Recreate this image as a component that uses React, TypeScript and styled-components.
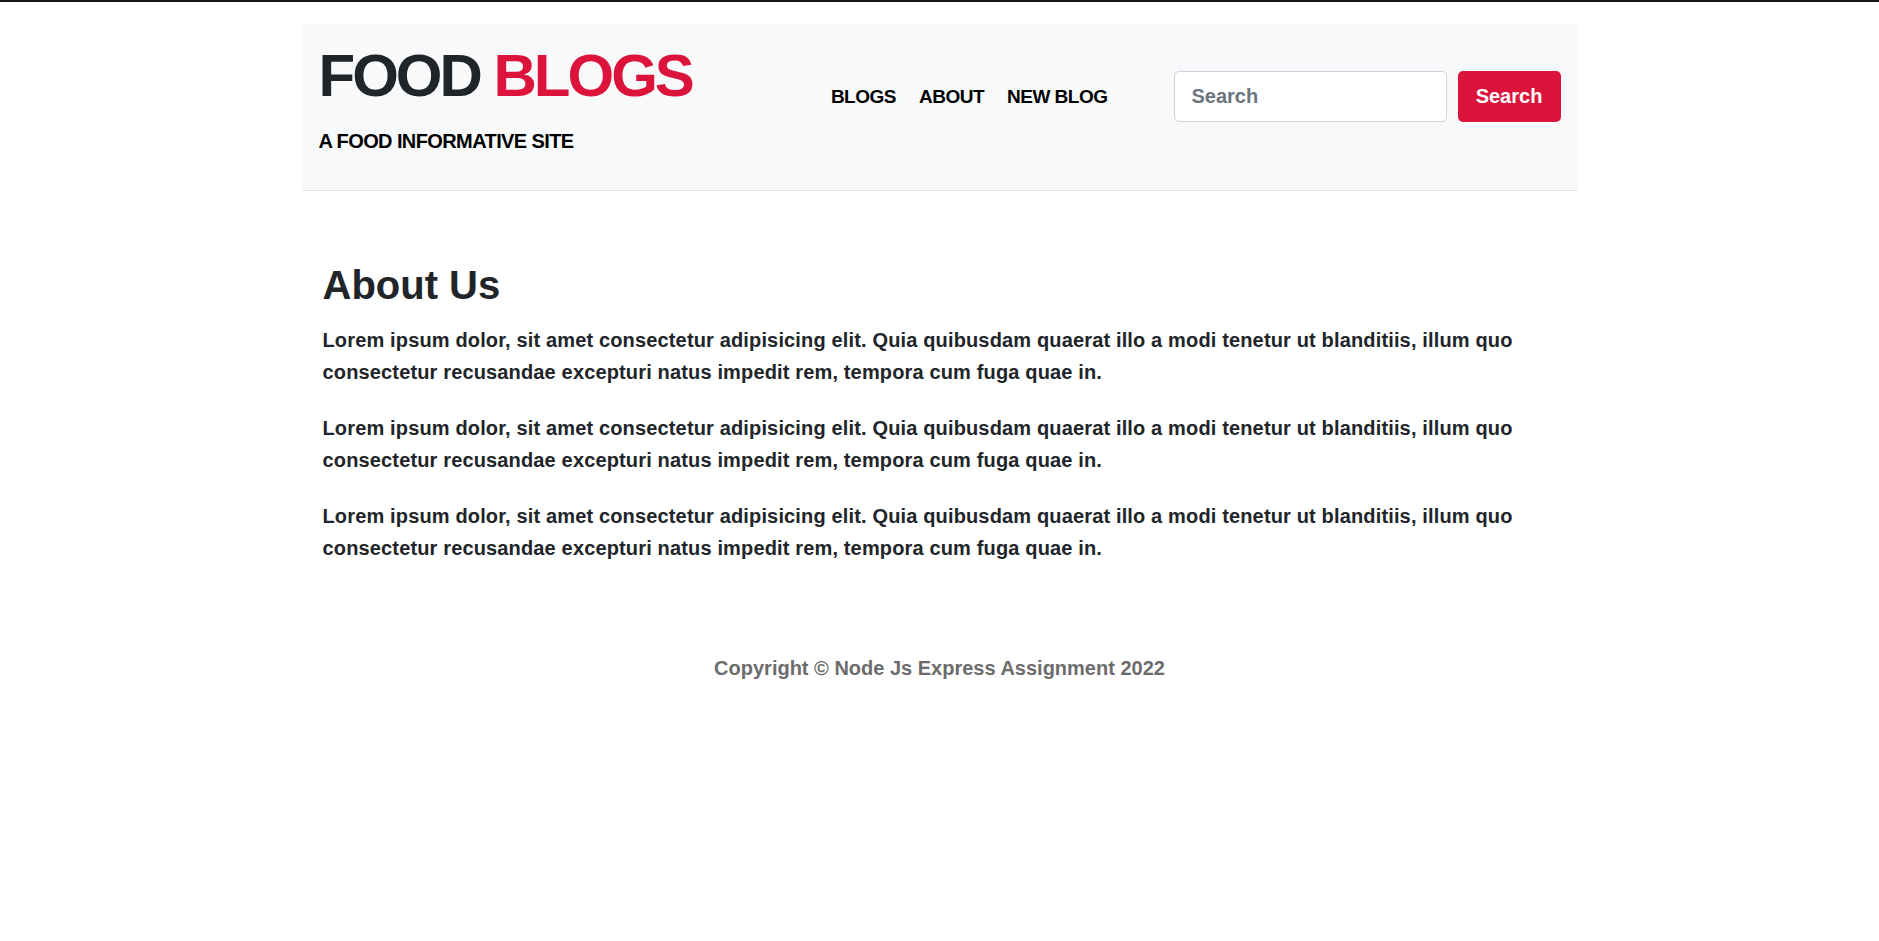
import React from 'react';
import styled, { createGlobalStyle } from 'styled-components';

const GlobalStyle = createGlobalStyle`
  * {
    box-sizing: border-box;
  }
  body {
    margin: 0;
    border-top: 2px solid #1a1610;
    background: #fff;
    color: #212529;
    font-family: "Liberation Sans", Arial, sans-serif;
  }
`;

const Header = styled.header`
  width: 1276px;
  height: 167px;
  margin: 22px auto 0;
  padding: 22px 17px 0 17px;
  display: flex;
  align-items: flex-start;
  background: #f8f9fa;
  border-bottom: 1px solid #dee2e6;
`;

const Brand = styled.div`
  display: flex;
  flex-direction: column;
  gap: 25px;
`;

const Title = styled.h1`
  margin: 0;
  font-size: 60px;
  line-height: 60px;
  font-weight: 700;
  letter-spacing: -3px;
  color: #212529;
`;

const Accent = styled.span`
  color: #dc143c;
`;

const Tagline = styled.h5`
  margin: 0;
  font-size: 20px;
  line-height: 20px;
  font-weight: 700;
  letter-spacing: -0.6px;
  color: #000;
`;

const Nav = styled.nav`
  margin: 25px 66px 0 auto;
  height: 51px;
  display: flex;
  align-items: center;
  gap: 23px;
`;

const NavLink = styled.a`
  font-size: 19px;
  font-weight: 700;
  letter-spacing: -0.5px;
  color: #000;
  text-decoration: none;
  cursor: pointer;
`;

const SearchForm = styled.form`
  margin-top: 25px;
  display: flex;
  gap: 11px;
`;

const SearchInput = styled.input`
  width: 273px;
  height: 51px;
  padding: 0 17px;
  border: 1px solid #ced4da;
  border-radius: 5px;
  background: #fff;
  font-family: "Liberation Sans", Arial, sans-serif;
  font-size: 20px;
  font-weight: 700;
  color: #212529;
  outline: none;

  &::placeholder {
    color: #6c757d;
  }
`;

const SearchButton = styled.button`
  width: 103px;
  height: 51px;
  border: 0;
  border-radius: 5px;
  background: #dc143c;
  color: #fff;
  font-family: "Liberation Sans", Arial, sans-serif;
  font-size: 20px;
  font-weight: 700;
  cursor: pointer;
`;

const Main = styled.main`
  width: 1276px;
  margin: 0 auto;
  padding: 70px 21px 0;
`;

const Heading = styled.h2`
  margin: 0 0 15px;
  font-size: 40px;
  line-height: 48px;
  font-weight: 700;
  color: #212529;
`;

const Text = styled.p`
  max-width: 1200px;
  margin: 0 0 24px;
  font-size: 20px;
  line-height: 32px;
  font-weight: 700;
  letter-spacing: 0.15px;
  color: #212529;
`;

const Footer = styled.footer`
  margin-top: 90px;
  text-align: center;
  font-size: 20px;
  line-height: 28px;
  font-weight: 700;
  color: #6c6c6c;
`;

const lorem =
  'Lorem ipsum dolor, sit amet consectetur adipisicing elit. Quia quibusdam quaerat illo a modi tenetur ut blanditiis, illum quo consectetur recusandae excepturi natus impedit rem, tempora cum fuga quae in.';

const App: React.FC = () => {
  return (
    <>
      <GlobalStyle />
      <Header>
        <Brand>
          <Title>
            FOOD <Accent>BLOGS</Accent>
          </Title>
          <Tagline>A FOOD INFORMATIVE SITE</Tagline>
        </Brand>
        <Nav>
          <NavLink>BLOGS</NavLink>
          <NavLink>ABOUT</NavLink>
          <NavLink>NEW BLOG</NavLink>
        </Nav>
        <SearchForm onSubmit={e => e.preventDefault()}>
          <SearchInput type="search" placeholder="Search" />
          <SearchButton type="submit">Search</SearchButton>
        </SearchForm>
      </Header>
      <Main>
        <Heading>About Us</Heading>
        {[0, 1, 2].map(i => (
          <Text key={i}>{lorem}</Text>
        ))}
      </Main>
      <Footer>Copyright © Node Js Express Assignment 2022</Footer>
    </>
  );
};

export default App;
